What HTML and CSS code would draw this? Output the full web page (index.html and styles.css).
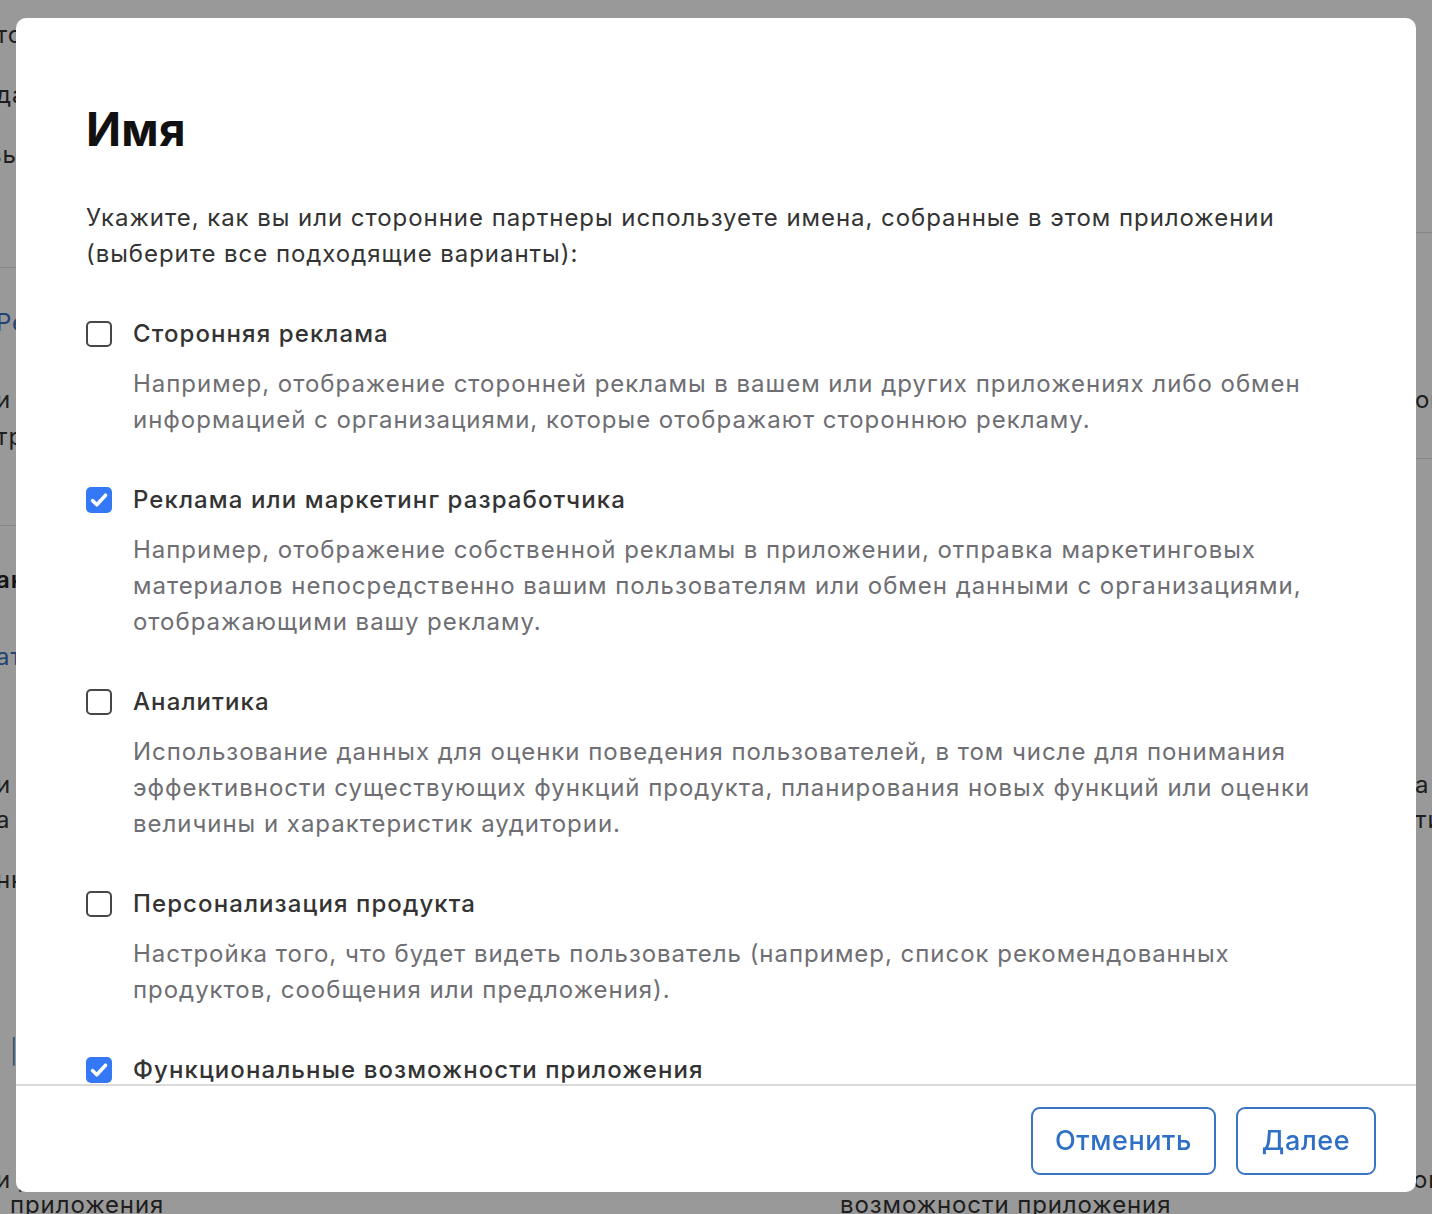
FILE: index.html
```html
<!DOCTYPE html>
<html lang="ru">
<head>
<meta charset="utf-8">
<title>Имя</title>
<link rel="stylesheet" href="styles.css">
</head>
<body>
<div class="page">
  <div class="col col-left">
    <section class="bg-sec s-l1">
      <p class="bg-line">тот</p>
      <p class="bg-line m35">да</p>
      <p class="bg-line m35 shift">вы</p>
    </section>
    <section class="bg-sec s-l2">
      <p class="bg-line link">Ре</p>
      <p class="bg-line m52">и</p>
      <p class="bg-line m12">тр</p>
    </section>
    <section class="bg-sec s-l3">
      <p class="bg-line bold">ан</p>
      <p class="bg-line link m52">ат</p>
      <p class="bg-line m103">и д</p>
      <p class="bg-line m10">а н</p>
      <p class="bg-line m35">нн</p>
    </section>
    <section class="bg-sec s-l4">
      <p class="bg-line link bar">|</p>
      <p class="bg-line m103">и д</p>
      <p class="bg-line indent">приложения</p>
    </section>
  </div>
  <div class="col col-right">
    <section class="bg-sec s-r1"></section>
    <section class="bg-sec s-r2">
      <p class="bg-line edge">ого</p>
    </section>
    <section class="bg-sec s-r3">
      <p class="bg-line edge">а п</p>
      <p class="bg-line edge m10">ти</p>
      <p class="bg-line edge2 m335">он</p>
      <p class="bg-line">возможности приложения</p>
    </section>
  </div>
</div>
<div class="overlay"></div>

<div class="modal" role="dialog" aria-labelledby="modal-title">
  <div class="modal-body">
    <h1 id="modal-title" class="modal-title">Имя</h1>
    <p class="intro">Укажите, как вы или сторонние партнеры используете имена, собранные в этом приложении<br>(выберите все подходящие варианты):</p>

    <div class="options">
      <div class="option">
        <span class="checkbox"></span>
        <span class="option-label">Сторонняя реклама</span>
        <p class="option-desc">Например, отображение сторонней рекламы в вашем или других приложениях либо обмен<br>информацией с организациями, которые отображают стороннюю рекламу.</p>
      </div>
      <div class="option">
        <span class="checkbox checked"><svg viewBox="0 0 26 26" width="26" height="26"><path d="M6.5 13.6 L10.8 17.8 L19.6 8.2" fill="none" stroke="#fff" stroke-width="3.5" stroke-linecap="round" stroke-linejoin="round"/></svg></span>
        <span class="option-label">Реклама или маркетинг разработчика</span>
        <p class="option-desc">Например, отображение собственной рекламы в приложении, отправка маркетинговых<br>материалов непосредственно вашим пользователям или обмен данными с организациями,<br>отображающими вашу рекламу.</p>
      </div>
      <div class="option">
        <span class="checkbox"></span>
        <span class="option-label">Аналитика</span>
        <p class="option-desc">Использование данных для оценки поведения пользователей, в том числе для понимания<br>эффективности существующих функций продукта, планирования новых функций или оценки<br>величины и характеристик аудитории.</p>
      </div>
      <div class="option">
        <span class="checkbox"></span>
        <span class="option-label">Персонализация продукта</span>
        <p class="option-desc">Настройка того, что будет видеть пользователь (например, список рекомендованных<br>продуктов, сообщения или предложения).</p>
      </div>
      <div class="option">
        <span class="checkbox checked"><svg viewBox="0 0 26 26" width="26" height="26"><path d="M6.5 13.6 L10.8 17.8 L19.6 8.2" fill="none" stroke="#fff" stroke-width="3.5" stroke-linecap="round" stroke-linejoin="round"/></svg></span>
        <span class="option-label">Функциональные возможности приложения</span>
        <p class="option-desc">Например, аутентификация пользователя, включение функций, предотвращение<br>мошенничества, обеспечение безопасности, работоспособности сервера.</p>
      </div>
    </div>
  </div>
  <div class="modal-footer">
    <button class="btn" type="button">Отменить</button>
    <button class="btn" type="button">Далее</button>
  </div>
</div>
</body>
</html>
```
FILE: styles.css
```css
* { box-sizing: border-box; }

html, body {
  margin: 0;
  padding: 0;
  width: 1432px;
  height: 1214px;
  overflow: hidden;
  background: #fff;
  font-family: Inter, "Noto Sans", "Liberation Sans", sans-serif;
}

/* ---------- background page ---------- */
.page {
  display: grid;
  grid-template-columns: 736px 696px;
  height: 1214px;
  overflow: hidden;
}
.col { overflow: hidden; min-width: 0; }
.bg-sec {
  border-bottom: 1px solid #dedede;
  overflow: hidden;
}
.bg-line {
  margin: 0;
  font-size: 24px;
  line-height: 25px;
  color: #333;
  white-space: nowrap;
  letter-spacing: 0.9px;
}
.bg-line.link { color: #3a72c0; }
.bg-line.bold { font-weight: 600; color: #222; }
.bg-line.bar { font-weight: 300; }
.col-left .bg-line { margin-left: -4px; }
.col-left .bg-line.shift { margin-left: -12px; }
.col-left .bg-line.indent { margin-left: 10px; }
.col-left .bg-line.bar { margin-left: 10px; }
.col-right .bg-line { margin-left: 104px; }
.col-right .bg-line.edge { margin-left: 679px; }
.col-right .bg-line.edge2 { margin-left: 677px; }

.m10 { margin-top: 10px !important; }
.m12 { margin-top: 12px !important; }
.m35 { margin-top: 35px !important; }
.m52 { margin-top: 52px !important; }
.m103 { margin-top: 103px !important; }
.m335 { margin-top: 335px !important; }

.s-l1 { height: 268px; padding-top: 22px; }
.s-l2 { height: 258px; padding-top: 42px; }
.s-l3 { height: 474px; padding-top: 41px; border-bottom-color: transparent; }
.s-l4 { height: 214px; padding-top: 39px; border-bottom: 0; }

.s-r1 { height: 233px; }
.s-r2 { height: 226px; padding-top: 154px; }
.s-r3 { height: 755px; padding-top: 313px; border-bottom: 0; }

.overlay {
  position: fixed;
  inset: 0;
  background: rgba(0, 0, 0, 0.4);
}

/* ---------- modal ---------- */
.modal {
  position: fixed;
  left: 16px;
  top: 18px;
  width: 1400px;
  height: 1174px;
  background: #fff;
  border-radius: 10px;
  display: flex;
  flex-direction: column;
  overflow: hidden;
}
.modal-body {
  flex: 1;
  min-height: 0;
  overflow: hidden;
  padding: 83px 70px 0 70px;
}
.modal-title {
  margin: 0;
  font-size: 46px;
  line-height: 56px;
  font-weight: 700;
  color: #111;
  letter-spacing: 0.3px;
}
.intro {
  margin: 43px 0 0;
  font-size: 24px;
  line-height: 36px;
  color: #333;
  white-space: nowrap;
  letter-spacing: 0.95px;
}
.options {
  margin-top: 44px;
  display: flex;
  flex-direction: column;
  gap: 44px;
}
.option {
  display: grid;
  grid-template-columns: 26px 1fr;
  column-gap: 21px;
  align-items: center;
}
.checkbox {
  width: 26px;
  height: 26px;
  border: 2px solid #474747;
  border-radius: 5px;
  display: block;
  justify-self: start;
}
.checkbox.checked {
  border: 0;
  background: #3478f6;
}
.checkbox svg { display: block; }
.option-label {
  font-size: 24px;
  line-height: 36px;
  font-weight: 500;
  color: #333;
  white-space: nowrap;
  letter-spacing: 1.1px;
}
.option-desc {
  grid-column: 2;
  margin: 14px 0 0;
  font-size: 24px;
  line-height: 36px;
  color: #6e6e73;
  white-space: nowrap;
  letter-spacing: 0.97px;
}

.modal-footer {
  flex: 0 0 108px;
  border-top: 2px solid #dadada;
  display: flex;
  justify-content: flex-end;
  align-items: center;
  gap: 20px;
  padding: 3px 40px 0;
}
.btn {
  height: 68px;
  padding: 0 22px;
  border: 2px solid #3a75c5;
  border-radius: 9px;
  background: #fff;
  color: #2f6fc6;
  font-family: Inter, "Noto Sans", "Liberation Sans", sans-serif;
  font-size: 27px;
  font-weight: 500;
  letter-spacing: 0.6px;
}
.btn:last-child { min-width: 140px; }
```
